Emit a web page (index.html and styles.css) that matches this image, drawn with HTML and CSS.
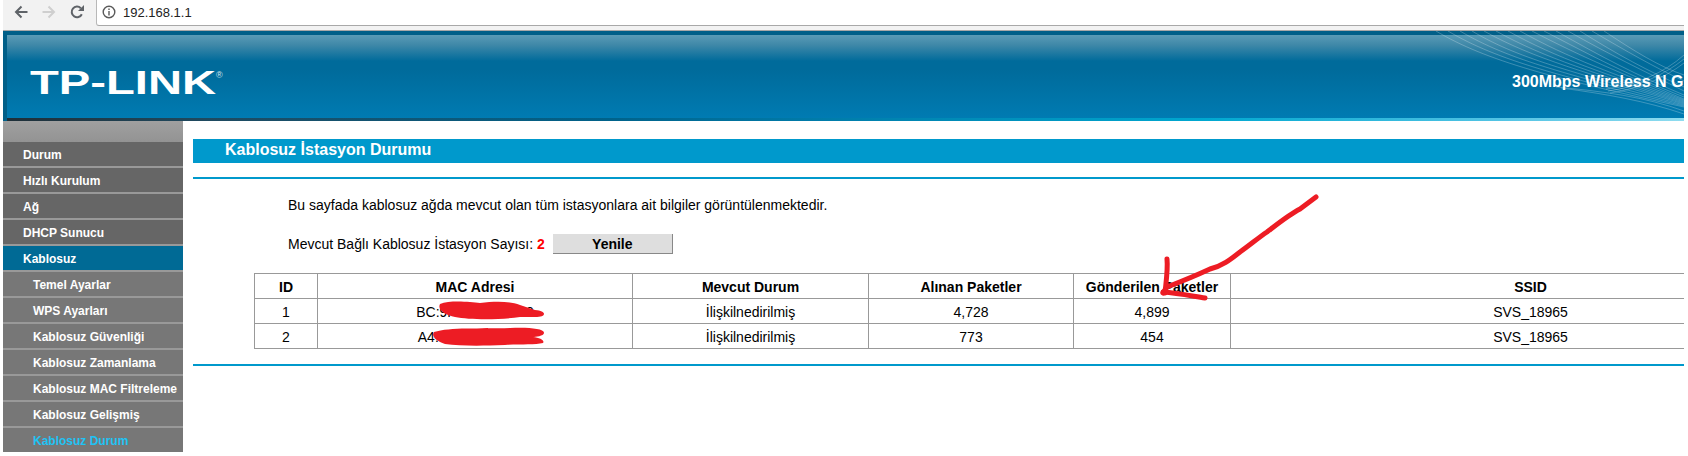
FILE: index.html
```html
<!DOCTYPE html>
<html lang="tr">
<head>
<meta charset="utf-8">
<title>TP-LINK</title>
<link rel="stylesheet" href="styles.css">
</head>
<body>
<div class="page">
  <div class="toolbar">
    <svg class="nav-icon" width="14" height="14" viewBox="0 0 14 14"><path d="M13.500 7H2M7.500 1.500L2 7l5.500 5.500" fill="none" stroke="#5f6368" stroke-width="2"/></svg>
    <svg class="nav-icon" width="14" height="14" viewBox="0 0 14 14"><path d="M0.500 7H12M6.500 1.500L12 7l-5.500 5.500" fill="none" stroke="#cfcfcf" stroke-width="2"/></svg>
    <svg class="nav-icon" width="14" height="14" viewBox="0 0 14 14"><path d="M11.800 9.200A5.300 5.300 0 1 1 10.800 3.200" fill="none" stroke="#5f6368" stroke-width="2"/><path d="M8 6h6V0z" fill="#5f6368"/></svg>
    <div class="omnibox">
      <svg width="14" height="14" viewBox="0 0 14 14"><circle cx="7" cy="7" r="5.800" fill="none" stroke="#5a5a5a" stroke-width="1.400"/><path d="M7 6v4.500M7 3.500v1.500" stroke="#5a5a5a" stroke-width="1.400"/></svg>
      <span class="url">192.168.1.1</span>
    </div>
  </div>
  <header class="banner">
    <div class="banner-inner">
      <div class="logo"><span class="logo-text">TP-LINK</span><span class="logo-mark">®</span></div>
      <div class="model">300Mbps Wireless N G</div>
    </div>
    <svg class="waves" width="248" height="87" viewBox="0 0 248 87">
      <g fill="none" stroke="#ffffff" stroke-opacity=".24">
        <path d="M0 0C50 30 120 48 248 76"/><path d="M12 0C62 30 128 46 248 75"/><path d="M24 0C74 30 136 44 248 74"/><path d="M36 0C86 30 144 42 248 73"/><path d="M48 0C98 28 152 42 248 72"/><path d="M60 0C110 28 160 42 248 71"/><path d="M72 0C122 28 168 42 248 70"/><path d="M84 0C134 28 176 42 248 69"/><path d="M96 0C146 26 184 42 248 68"/><path d="M108 0C158 26 192 44 248 66"/><path d="M120 0C166 26 200 44 248 64"/><path d="M132 0C174 24 208 40 248 60"/><path d="M144 0C182 24 212 40 248 56"/><path d="M156 0C190 20 218 36 248 50"/><path d="M168 0C198 20 224 36 248 44"/>
        <path d="M248 24C228 42 200 54 170 58"/><path d="M248 28C228 44 202 56 172 60"/><path d="M248 32C230 46 204 58 174 62"/>
        <path d="M120 56C165 60 210 66 248 80"/><path d="M125 57C170 63 210 70 248 83"/>
      </g>
    </svg>
    <div class="banner-strip"></div>
  </header>
  <div class="main">
    <nav class="side">
      <a class="item">Durum</a>
      <a class="item">Hızlı Kurulum</a>
      <a class="item">Ağ</a>
      <a class="item">DHCP Sunucu</a>
      <a class="item item-open">Kablosuz</a>
      <a class="item sub">Temel Ayarlar</a>
      <a class="item sub">WPS Ayarları</a>
      <a class="item sub">Kablosuz Güvenliği</a>
      <a class="item sub">Kablosuz Zamanlama</a>
      <a class="item sub">Kablosuz MAC Filtreleme</a>
      <a class="item sub">Kablosuz Gelişmiş</a>
      <a class="item sub current">Kablosuz Durum</a>
    </nav>
    <section class="content">
      <h1 class="title">Kablosuz İstasyon Durumu</h1>
      <div class="rule"></div>
      <p class="intro">Bu sayfada kablosuz ağda mevcut olan tüm istasyonlara ait bilgiler görüntülenmektedir.</p>
      <div class="count-row">
        <span>Mevcut Bağlı Kablosuz İstasyon Sayısı: <b class="count">2</b></span>
        <button class="refresh" type="button">Yenile</button>
      </div>
      <table class="stations">
        <colgroup>
          <col class="c-id"><col class="c-mac"><col class="c-state"><col class="c-rx"><col class="c-tx"><col class="c-ssid">
        </colgroup>
        <thead>
          <tr><th>ID</th><th>MAC Adresi</th><th>Mevcut Durum</th><th>Alınan Paketler</th><th>Gönderilen Paketler</th><th>SSID</th></tr>
        </thead>
        <tbody>
          <tr><td>1</td><td>BC:9F:00:00:00:00</td><td>İlişkilnedirilmiş</td><td>4,728</td><td>4,899</td><td>SVS_18965</td></tr>
          <tr><td>2</td><td>A4:00:00:00:00:00</td><td>İlişkilnedirilmiş</td><td>773</td><td>454</td><td>SVS_18965</td></tr>
        </tbody>
      </table>
      <div class="rule rule-bottom"></div>
    </section>
  </div>
  <svg class="scribble" width="1684" height="456" viewBox="0 0 1684 456">
    <path class="blot" d="M440 304C450 300 470 302 480 303C495 301 510 301 520 305L535 310C547 311 547 317 535 317L520 317C500 320 470 320 455 317C445 315 437 310 440 304Z"/>
    <path class="blot" d="M434 332C450 327 480 329 510 328C525 327 545 328 544 333C544 336 535 337 533 337C540 338 545 340 543 343C535 345 520 344 505 345C480 346 460 346 445 344C436 341 431 336 434 332Z"/>
    <path class="pen" d="M1316 197L1300 209C1290 214 1280 222 1267 232C1258 238 1250 245 1240 252C1230 260 1222 266 1210 269C1195 276 1180 282 1167 287L1163 293"/>
    <path class="pen" d="M1167 259C1168 270 1166 282 1165 293"/>
    <path class="pen" d="M1163 292C1178 293 1192 296 1205 298"/>
  </svg>
</div>
</body>
</html>
```
FILE: styles.css
```css
* { box-sizing: border-box; }
html, body { margin: 0; padding: 0; background: #fff; }
body { font-family: "Liberation Sans", Arial, sans-serif; color: #000; overflow: hidden; }
.page { position: relative; width: 1681px; height: 456px; margin-left: 3px; overflow: hidden; }
.toolbar { display: flex; align-items: flex-start; height: 31px; background: #f2f2f2; border-bottom: 1px solid #a8a8a8; padding: 5px 0 0 11px; gap: 14px; }
.nav-icon { flex: none; }
.omnibox { display: flex; align-items: center; gap: 7px; flex: 1; height: 26px; margin: -5px 0 0 -2px; padding: 0 0 1px 5px; background: #fff; border-left: 1px solid #b8b8b8; border-bottom: 1px solid #a8a8a8; border-bottom-left-radius: 3px; }
.url { font-size: 13px; color: #222; }
.banner { position: relative; height: 90px; background: #005f88; padding: 4px 0 0 4px; overflow: hidden; }
.banner-inner { display: flex; justify-content: space-between; align-items: center; height: 83px; padding: 13px 0 0 23px; background: linear-gradient(#5a9bb6 0, #3f88a8 10px, #006b9b 26px, #006b9b 35px, #007bb2 83px); }
.logo { display: flex; align-items: flex-start; }
.logo-text { display: inline-block; width: 186px; font-size: 33px; line-height: 26px; font-weight: 700; color: #fff; transform: scaleX(1.43); transform-origin: 0 50%; white-space: nowrap; }
.logo-mark { font-size: 9px; line-height: 10px; color: #d0e4ee; }
.model { flex: none; width: 172px; margin: 0 0 3px auto; font-size: 16px; font-weight: 700; color: #fff; white-space: nowrap; overflow: hidden; }
.waves { position: absolute; right: 0; top: 0; }
.banner-strip { height: 3px; background: linear-gradient(90deg, #1f2f38 0, #1f4a60 200px, #00628a 600px, #007aa8 800px, #00a8d0 1200px, #54c4e4 1500px, #90dcef 1681px); }
.main { display: flex; }
.side { flex: none; display: flex; flex-direction: column; width: 180px; height: 333px; padding-top: 21px; background: linear-gradient(#a0a0a0, #939393 21px, #fff 21px); }
.item { display: flex; align-items: center; flex: none; height: 24px; margin-bottom: 2px; padding: 1px 0 0 20px; background: #666; color: #fff; font-size: 12px; font-weight: 700; white-space: nowrap; box-shadow: 0 2px 0 #999; }
.item-open { background: #006a95; }
.sub { padding-left: 30px; background: #777; }
.current { color: #1fc3f5; box-shadow: none; }
.content { flex: 1; min-width: 0; padding: 18px 0 0 10px; overflow: hidden; }
.title { margin: 0; height: 24px; padding: 0 0 3px 32px; background: #0099cc; color: #fff; font-size: 16px; line-height: 21px; font-weight: 700; }
.rule { height: 2px; margin-top: 14px; background: #0099cc; }
.intro { margin: 18px 0 0 95px; font-size: 14px; line-height: 16px; }
.count-row { display: flex; align-items: center; gap: 8px; margin: 21px 0 0 95px; height: 20px; font-size: 14px; }
.count { color: #f00; }
.refresh { width: 120px; height: 20px; padding: 0; background: #dedede; border: 0; border-right: 1px solid #888; border-bottom: 1px solid #888; font: 700 14px "Liberation Sans", Arial, sans-serif; color: #000; }
.stations { width: 1576px; margin: 19px 0 0 61px; table-layout: fixed; border-collapse: collapse; }
.stations th, .stations td { height: 25px; padding: 1px 0 0; border: 1px solid #999; text-align: center; font-size: 14px; white-space: nowrap; }
.c-id { width: 63px; } .c-mac { width: 315px; } .c-state { width: 236px; } .c-rx { width: 205px; } .c-tx { width: 157px; } .c-ssid { width: 600px; }
.rule-bottom { margin-top: 15px; }
.scribble { position: absolute; left: -3px; top: 0; pointer-events: none; }
.blot { fill: #ed1c24; }
.pen { fill: none; stroke: #ed1c24; stroke-width: 5; stroke-linecap: round; stroke-linejoin: round; }
```
